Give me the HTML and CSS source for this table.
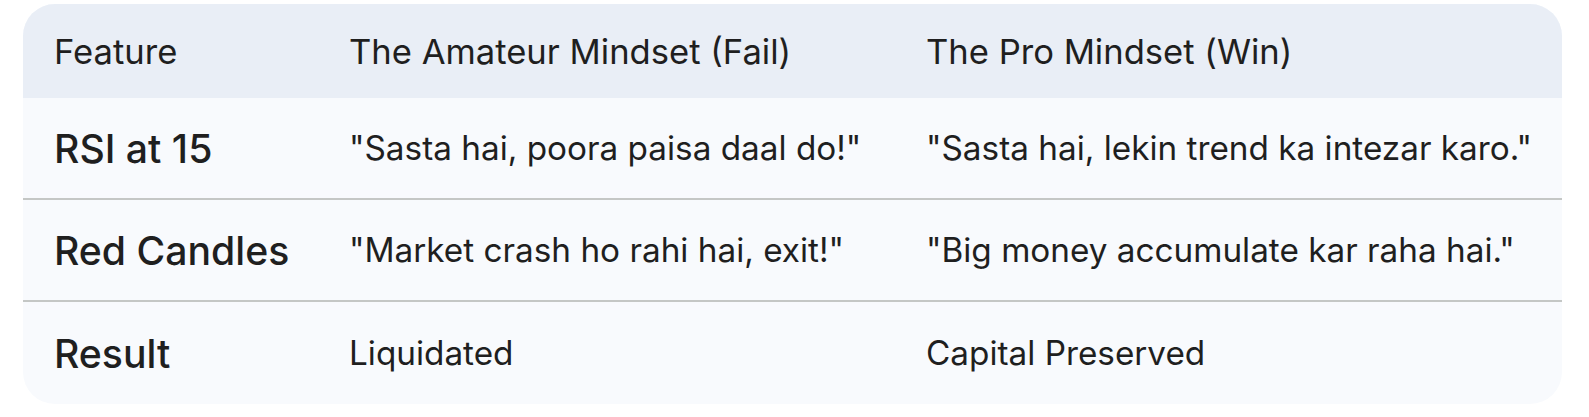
FILE: index.html
```html
<!DOCTYPE html>
<html>
<head>
<meta charset="utf-8">
<link rel="stylesheet" href="styles.css">
</head>
<body>
<div class="wrap">
  <table class="cmp">
    <colgroup>
      <col class="c1"><col class="c2"><col class="c3">
    </colgroup>
    <thead>
      <tr>
        <th>Feature</th>
        <th>The Amateur Mindset (Fail)</th>
        <th>The Pro Mindset (Win)</th>
      </tr>
    </thead>
    <tbody>
      <tr>
        <td class="key">RSI at 15</td>
        <td>"Sasta hai, poora paisa daal do!"</td>
        <td>"Sasta hai, lekin trend ka intezar karo."</td>
      </tr>
      <tr>
        <td class="key">Red Candles</td>
        <td>"Market crash ho rahi hai, exit!"</td>
        <td>"Big money accumulate kar raha hai."</td>
      </tr>
      <tr class="last">
        <td class="key">Result</td>
        <td>Liquidated</td>
        <td>Capital Preserved</td>
      </tr>
    </tbody>
  </table>
</div>
</body>
</html>
```

FILE: styles.css
```css
html, body {
  margin: 0;
  padding: 0;
  background: #ffffff;
}
.wrap {
  padding: 4px 27px 0 23px;
}
.cmp {
  width: 1539px;
  border-collapse: separate;
  border-spacing: 0;
  table-layout: fixed;
  font-family: Inter, Roboto, "Liberation Sans", sans-serif;
  color: #1f1f1f;
  background: #f8fafd;
  border-radius: 32px;
  overflow: hidden;
}
.c1 { width: 295px; }
.c2 { width: 577px; }
.c3 { width: 667px; }
.cmp th {
  background: #e9eef6;
  height: 94px;
  padding: 0 0 0 31px;
  text-align: left;
  font-weight: 430;
  font-size: 34.6px;
  box-sizing: border-box;
  white-space: nowrap;
}
.cmp td {
  height: 100px;
  padding: 0 0 0 31px;
  font-size: 33.3px;
  font-weight: 400;
  border-bottom: 2px solid #c4c7c5;
  white-space: nowrap;
}
.cmp td.key {
  font-size: 39.2px;
  font-weight: 480;
}
.cmp tr.last td {
  border-bottom: none;
  height: 102px;
}
```
